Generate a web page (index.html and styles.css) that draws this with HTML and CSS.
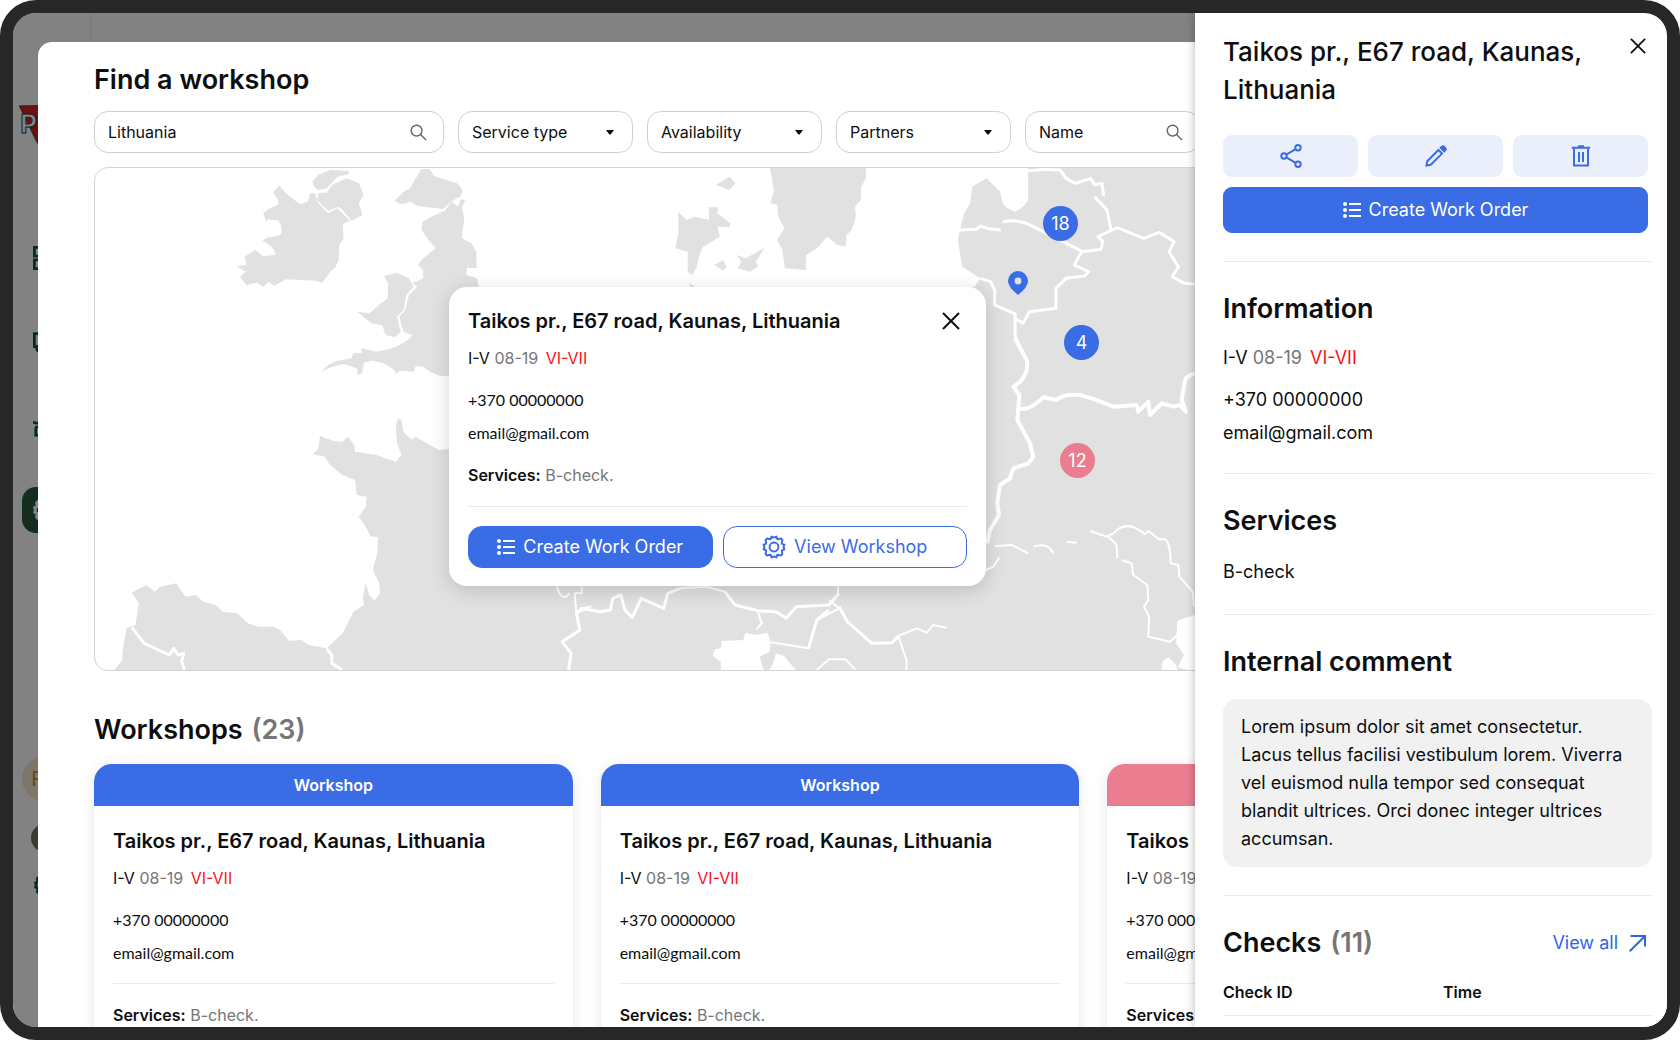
FILE: index.html
```html
<!DOCTYPE html>
<html lang="en">
<head>
<meta charset="utf-8">
<meta name="viewport" content="width=device-width, initial-scale=1">
<title>Find a workshop</title>
<link rel="stylesheet" href="styles.css">
</head>
<body>
<svg class="sprite" aria-hidden="true">
  <symbol id="i-search" viewBox="0 0 18 18"><circle cx="7" cy="7" r="5.7"/><path d="M11.2 11.2 17 17"/></symbol>
  <symbol id="i-close" viewBox="0 0 18 18"><path d="M1 1 17 17M17 1 1 17"/></symbol>
  <symbol id="i-list" viewBox="0 0 18 16"><g fill="currentColor" stroke="none"><circle cx="2" cy="2" r="2"/><circle cx="2" cy="8" r="2"/><circle cx="2" cy="14" r="2"/></g><path d="M6 2H18M6 8H18M6 14H18"/></symbol>
  <symbol id="i-gear" viewBox="0 0 24 24"><circle cx="12" cy="12" r="4.4"/><path d="M8.6 4.2 9.6 1.6Q12 3.2 14.4 1.6L15.4 4.2 19.2 3.6 20.4 4.9 19.8 8.6 22.4 9.6Q20.8 12 22.4 14.4L19.8 15.4 20.4 19.1 19.2 20.4 15.4 19.8 14.4 22.4Q12 20.8 9.6 22.4L8.6 19.8 4.8 20.4 3.6 19.1 4.2 15.4 1.6 14.4Q3.2 12 1.6 9.6L4.2 8.6 3.6 4.9 4.8 3.6Z" stroke-linejoin="round"/></symbol>
  <symbol id="i-share" viewBox="0 0 22 24"><circle cx="4" cy="12" r="2.7"/><circle cx="18" cy="3.8" r="2.7"/><circle cx="18" cy="20.2" r="2.7"/><path d="M6.4 10.6 15.6 5.2M6.4 13.4 15.6 18.8"/></symbol>
  <symbol id="i-edit" viewBox="0 0 22 22"><path d="M1.5 20.5 2.2 16.2 13.4 5 17 8.6 5.8 19.8Z"/><path fill="currentColor" d="M15.8 2.8 17.2 1.6Q18 1 18.9 1.8L20.4 3.3Q21.1 4.1 20.5 4.9L19.2 6.3Z"/></symbol>
  <symbol id="i-trash" viewBox="0 0 20 22"><path d="M3 3.5V20.4H17V3.5M8 7V17M12 7V17"/><path d="M.8 2.8H19.2"/><path d="M7 1.2H13"/></symbol>
  <symbol id="i-arrow" viewBox="0 0 17 17"><path d="M.7 16.3 16 1M1.5 1H16V11.5"/></symbol>
  <symbol id="i-caret" viewBox="0 0 8 5"><path fill="currentColor" stroke="none" d="M0 0H8L5 4Q4 5 3 4Z"/></symbol>
  <symbol id="i-grid" viewBox="0 0 26 26"><path d="M1.5 1.5H11V11H1.5ZM15 1.5H24.5V11H15ZM1.5 15H11V24.5H1.5ZM15 15H24.5V24.5H15Z"/></symbol>
  <symbol id="i-truck" viewBox="0 0 26 26"><path d="M1.5 4H16V18H1.5ZM16 9H21L25 13V18H16"/><circle cx="7" cy="20" r="2.8"/><circle cx="20" cy="20" r="2.8"/></symbol>
  <symbol id="i-trailer" viewBox="0 0 26 26"><path d="M0 9 4 10H22M9 14H5Q3 14 3 17V23H24V14H9"/></symbol>
</svg>

<div class="screen">
  <nav class="sidebar" aria-label="Main">
    <svg class="logo" viewBox="0 0 54 42"><path fill="#e01b22" d="M0 1 54 0 30 42 19 40Z"/><text x="1" y="29">PRO</text></svg>
    <ul class="nav">
      <li><a href="#" aria-label="Dashboard"><svg><use href="#i-grid"/></svg></a></li>
      <li><a href="#" aria-label="Trucks"><svg><use href="#i-truck"/></svg></a></li>
      <li><a href="#" aria-label="Trailers"><svg><use href="#i-trailer"/></svg></a></li>
      <li><a href="#" aria-label="Workshops" class="current"><svg><use href="#i-gear"/></svg></a></li>
    </ul>
    <div class="account">
      <span class="initial">RK</span>
      <span class="photo"></span>
      <svg class="settings"><use href="#i-gear"/></svg>
    </div>
  </nav>
  <div class="backdrop"></div>

  <main class="sheet">
    <h1>Find a workshop</h1>
    <form class="filters">
      <label class="field wide"><input type="text" value="Lithuania" aria-label="Location"><svg class="search"><use href="#i-search"/></svg></label>
      <label class="field"><select aria-label="Service type"><option>Service type</option></select><svg class="caret"><use href="#i-caret"/></svg></label>
      <label class="field"><select aria-label="Availability"><option>Availability</option></select><svg class="caret"><use href="#i-caret"/></svg></label>
      <label class="field"><select aria-label="Partners"><option>Partners</option></select><svg class="caret"><use href="#i-caret"/></svg></label>
      <label class="field"><input type="text" placeholder="Name" aria-label="Name"><svg class="search"><use href="#i-search"/></svg></label>
    </form>

    <section class="map" aria-label="Map">
      <svg class="land" viewBox="95 168 1490 502" preserveAspectRatio="xMinYMin slice">
        <g class="ground">
          <g transform="scale(.35714 .33333)">
            <path d="M662 798 690 795 685 770 715 750 735 768 770 765Q775 745 735 722L745 714 785 705Q795 685 780 662L752 658 745 664 737 640 752 628 780 612 778 600 765 577 782 556 800 580 840 613 862 605 868 580 882 580 890 607 918 640 945 625 980 662 960 672 962 715 950 735 948 780 940 800 925 815 902 849 885 842 800 838 768 858 752 845 737 860 718 848 690 855 672 830 688 815Z"/>
            <path d="M875 545 890 525 925 510 975 512 978 522 945 530 915 565 890 570 880 560Z"/>
            <path d="M892 578 915 578 930 555 970 535 1005 550 1018 585 1005 610 1015 645 985 662 950 620 918 632 888 600Z"/>
            <path d="M1105 603 1130 575 1148 565 1180 507 1203 507 1215 528 1250 540 1280 550 1295 570 1290 590 1270 600 1240 627 1170 618 1150 605 1125 613Z"/>
            <path d="M1245 632 1265 605 1283 620 1290 598 1302 600 1293 625 1300 655 1293 715 1320 730 1333 755 1335 805 1308 803 1305 825 1335 835 1341 860 1341 1000 1300 1127 1257 1127 1234 1128 1209 1118 1184 1100 1164 1098 1159 1115 1119 1112 1109 1122 1104 1110 1074 1090 1044 1082 1019 1088 1014 1120 1002 1125 999 1105 964 1092 929 1100 899 1117 919 1095 944 1082 984 1075 989 1060 1014 1058 1012 1045 1054 1055 1079 1050 1110 1040 1142 1020 1155 1005 1130 995 1118 950 1135 930 1145 885 1168 860 1155 850 1185 835 1185 810 1170 795 1185 775 1220 745 1200 720 1180 690 1183 665 1205 652Z"/>
            <path d="M1075 828 1110 818 1145 835 1158 860 1138 885 1130 930 1112 950 1122 995 1105 1012 1080 1005 1070 975 1040 970 1000 935 1035 940 1065 912 1085 895 1087 850Z"/>
          </g>
          <g transform="translate(560 0) scale(.40816 .33333)">
            <path d="M290 635 310 660 330 650 365 660 365 622 387 622 385 640 418 670 415 682 385 680 392 710 350 740 340 770 335 800 325 825 313 815 313 755 283 745 290 700Z"/>
            <path d="M382 555 415 530 430 550 415 570ZM378 795 400 780 408 800 400 812ZM432 765 455 775 500 745 480 785 485 800 465 815 435 805 445 785ZM318 850 333 862 318 862Z"/>
            <path d="M514 500 524 570 516 610 532 615 535 650 550 685 532 720 545 750 551 805 602 810 603 765 630 745 655 710 680 735 700 740 702 705 715 690 725 650 723 620 737 600 738 560 750 535 750 500Z"/>
            <path d="M1147 500 1147 600Q1135 625 1115 635 1090 625 1085 610L1078 575 1045 535 1010 560 1005 610 990 640 980 690 975 720 985 800 1030 835 1015 860 970 870 970 2020 2600 2020 2600 500Z"/>
          </g>
          <g transform="translate(80 340) scale(.35714 .33333)">
            <path d="M1033 327 1005 330 975 312 940 290 930 300 905 275 900 240 890 236 884 260 888 310 900 345 885 365 830 345 770 335 768 315 750 290 735 305 710 303 672 288 668 325 652 343 685 350 700 375 735 405 770 420 775 465 803 470 800 500 780 530 800 560 815 590 835 590 832 640 820 690 838 730 840 760 825 782 810 765 800 730 792 770 795 795 765 815 750 850 735 880 690 925 640 915 620 900 585 902 560 870 540 860 500 860 470 850 440 820 400 815 380 795 345 785 325 765 295 770 270 730 225 740 210 755 185 735 145 758 165 790 155 855 130 865 120 930 118 960 90 1000 2500 1000 2500 327Z"/>
          </g>
        </g>
        <g class="water">
          <path transform="translate(900 340) scale(.33333)" d="M832 842 900 820 900 1000 833 982 852 945 828 910ZM783 1000 788 962 805 952 828 975 835 1000Z"/>
          <path transform="translate(580 560) scale(.40816 .33333)" d="M347 243 400 240 405 218 430 225 460 218 467 250 465 275 440 290 452 340 345 340 345 305 325 288 330 268 345 265ZM460 340 475 305 480 280 500 288 535 340Z"/>
        </g>
        <g class="borders">
          <path class="medium" transform="translate(560 0) scale(.40816 .33333)" d="M1147 512 1190 508 1225 510 1240 535 1262 550 1300 535 1310 555 1328 550 1332 588M1310 590 1340 630 1350 690M980 690 1020 688 1030 678 1050 686 1080 690M1085 665Q1125 655 1160 680L1200 705 1280 755 1325 748 1330 725 1318 710 1365 683 1400 700 1430 715 1468 697 1505 725 1492 755 1515 800 1500 830 1530 850 1580 855M1278 755 1260 795 1295 815 1285 828 1240 835 1215 865 1215 925 1150 935 1135 970 1115 955 1115 1010 1135 1060M1030 835 1055 845 1065 870 1065 915 1115 942 1115 960"/>
          <g transform="translate(900 340) scale(.33333)">
            <path class="heavy" d="M345 -5 380 60Q390 110 340 140L358 165 352 240 390 310 400 350 385 370 340 385 330 415 300 435 292 490 297 525 270 570 262 610M358 205Q385 215 430 172L470 180Q490 160 540 165L585 178 640 200 710 195 715 215 745 185 750 225 785 190 820 200 840 195 858 215 845 180 855 120Q865 100 900 100"/>
            <path d="M285 618 335 615 385 640M400 620Q445 605 460 640M500 605 530 608M570 573 620 590 640 580Q680 535 735 583L745 573 780 600Q810 580 812 670L835 675 838 710 878 755 882 800M625 590 650 615 652 655M665 660 695 670 700 705 742 735 745 780 732 800 747 830 745 890 810 905 832 885M258 690 280 680 298 652"/>
          </g>
          <path class="medium" transform="translate(580 560) scale(.40816 .33333)" d="M0 145 50 155 75 150 80 115 100 105 110 150 128 172 150 115 205 145 215 100 245 85M355 95 380 135 435 152 480 155 505 175 530 140 610 135 635 100M635 140 655 185 715 250 765 248 780 228M610 150 580 180 560 265"/>
          <path transform="translate(580 560) scale(.40816 .33333)" d="M245 85 310 80 355 95M632 105V75M435 152 445 190 432 208M610 120 635 145 580 180 560 265 467 247M780 228 825 205 850 218 865 195 898 203M780 228 800 300 800 330M580 330 610 298 650 298 675 330"/>
          <path class="medium" transform="translate(80 340) scale(.35714 .33333)" d="M145 862 180 910 250 945 262 925 275 945 290 940 285 965 292 990M690 925 705 945 705 970 735 990M1368 990 1375 940 1350 905 1400 870 1390 820 1405 805"/>
          <path transform="translate(80 340) scale(.35714 .33333)" d="M1385 760 1390 820 1430 800 1405 805M1335 740Q1350 790 1370 760M1385 760H1405V740"/>
        </g>
      </svg>

      <button type="button" class="cluster c18">18</button>
      <button type="button" class="cluster c4">4</button>
      <button type="button" class="cluster pink c12">12</button>
      <svg class="pin" viewBox="0 0 20 24"><path d="M10 0A10 10 0 0 1 20 10Q20 16 10 24 0 16 0 10A10 10 0 0 1 10 0Z"/><circle cx="10" cy="10" r="3.4"/></svg>

      <article class="popup">
        <header><h3>Taikos pr., E67 road, Kaunas, Lithuania</h3><button type="button" class="bare" aria-label="Close"><svg><use href="#i-close"/></svg></button></header>
        <p class="hours">I-V <span class="muted">08-19</span> <span class="closed">VI-VII</span></p>
        <p class="phone">+370 00000000</p>
        <p class="email">email@gmail.com</p>
        <p class="services"><b>Services:</b> <span class="muted">B-check.</span></p>
        <div class="actions">
          <button type="button" class="btn primary"><svg class="list"><use href="#i-list"/></svg>Create Work Order</button>
          <button type="button" class="btn outline"><svg class="gear"><use href="#i-gear"/></svg>View Workshop</button>
        </div>
      </article>
    </section>

    <h2>Workshops <span class="count">(23)</span></h2>
    <div class="cards">
      <article class="card">
        <div class="tag">Workshop</div>
        <div class="body">
          <h3>Taikos pr., E67 road, Kaunas, Lithuania</h3>
          <p class="hours">I-V <span class="muted">08-19</span> <span class="closed">VI-VII</span></p>
          <p class="phone">+370 00000000</p>
          <p class="email">email@gmail.com</p>
          <p class="services ruled"><b>Services:</b> <span class="muted">B-check.</span></p>
        </div>
      </article>
      <article class="card">
        <div class="tag">Workshop</div>
        <div class="body">
          <h3>Taikos pr., E67 road, Kaunas, Lithuania</h3>
          <p class="hours">I-V <span class="muted">08-19</span> <span class="closed">VI-VII</span></p>
          <p class="phone">+370 00000000</p>
          <p class="email">email@gmail.com</p>
          <p class="services ruled"><b>Services:</b> <span class="muted">B-check.</span></p>
        </div>
      </article>
      <article class="card">
        <div class="tag pink"></div>
        <div class="body">
          <h3>Taikos pr., E67 road, Kaunas, Lithuania</h3>
          <p class="hours">I-V <span class="muted">08-19</span></p>
          <p class="phone">+370 00000000</p>
          <p class="email">email@gmail.com</p>
          <p class="services ruled"><b>Services:</b></p>
        </div>
      </article>
    </div>
  </main>

  <aside class="drawer" aria-label="Workshop details">
    <header class="drawer-head">
      <h2>Taikos pr., E67 road, Kaunas, Lithuania</h2>
      <button type="button" class="bare" aria-label="Close panel"><svg><use href="#i-close"/></svg></button>
    </header>
    <div class="tools">
      <button type="button" class="tool" aria-label="Share"><svg><use href="#i-share"/></svg></button>
      <button type="button" class="tool" aria-label="Edit"><svg><use href="#i-edit"/></svg></button>
      <button type="button" class="tool trash" aria-label="Delete"><svg><use href="#i-trash"/></svg></button>
      <button type="button" class="btn primary order"><svg class="list"><use href="#i-list"/></svg>Create Work Order</button>
    </div>
    <section>
      <h2>Information</h2>
      <p class="hours">I-V <span class="muted">08-19</span> <span class="closed">VI-VII</span></p>
      <p class="phone">+370 00000000</p>
      <p class="email">email@gmail.com</p>
    </section>
    <section>
      <h2>Services</h2>
      <p class="text">B-check</p>
    </section>
    <section>
      <h2>Internal comment</h2>
      <p class="comment">Lorem ipsum dolor sit amet consectetur. Lacus tellus facilisi vestibulum lorem. Viverra vel euismod nulla tempor sed consequat blandit ultrices. Orci donec integer ultrices accumsan.</p>
    </section>
    <section>
      <div class="row"><h2>Checks <span class="count">(11)</span></h2><a href="#">View all<svg><use href="#i-arrow"/></svg></a></div>
      <table><thead><tr><th scope="col">Check ID</th><th scope="col">Time</th></tr></thead></table>
    </section>
  </aside>
</div>
</body>
</html>
```
FILE: styles.css
```css
* { box-sizing: border-box; }
:root { --blue: #3a6ce6; --pink: #ea7d90; --ink: #0d0e10; --muted: #757575; --line: #ebebeb; }
body { margin: 0; background: #fff; color: var(--ink); font: 16px/24px Inter, "Liberation Sans", sans-serif; }
h1, h2, h3, p, ul { margin: 0; padding: 0; }
h1, h2 { font-size: 27px; line-height: 34px; font-weight: 600; }
h3 { font-size: 20px; line-height: 28px; font-weight: 600; }
button, input, select { font: inherit; color: inherit; }
button { cursor: pointer; }
svg { fill: none; stroke: currentColor; display: block; flex: none; }
.sprite { position: absolute; width: 0; height: 0; }

.screen { position: relative; height: 100vh; overflow: hidden; border: 13px solid #272727; border-radius: 36px; background: #fff; }

/* Navigation behind the sheet */
.sidebar { display: flex; flex-direction: column; align-items: center; width: 78px; height: 100%; padding: 92px 14px 131px 0; border-right: 1px solid #eee; color: #0b5a34; }
.logo { width: 52px; height: 40px; margin-bottom: 90px; overflow: visible; }
.logo text { font: 700 27px Inter, sans-serif; fill: #fff; stroke: #333; stroke-width: 1px; }
.nav { display: flex; flex-direction: column; gap: 38px; list-style: none; }
.nav a { display: grid; place-items: center; width: 46px; height: 46px; border-radius: 14px; color: inherit; }
.nav svg { width: 24px; height: 24px; stroke-width: 3px; }
.nav .current { background: #26583b; color: #fff; }
.account { display: flex; flex-direction: column; align-items: center; gap: 22px; margin-top: auto; }
.initial { display: grid; place-items: center; width: 46px; height: 46px; border-radius: 50%; background: #f7e9cf; color: #d0901c; font-size: 20px; }
.photo { width: 28px; height: 28px; border-radius: 50%; background: #77776a; }
.settings { width: 22px; height: 22px; stroke-width: 3px; }
.backdrop { position: absolute; inset: 0; background: rgb(0 0 0 / 49%); border-radius: 22px; }

/* Search sheet */
.sheet { position: absolute; inset: 29px 0 0 25px; padding: 21px 81px 0 56px; background: #fff; border-top-left-radius: 14px; overflow: hidden; }
.filters { display: flex; gap: 14px; margin: 14px 0; }
.field { display: flex; align-items: center; width: 175px; height: 42px; padding-right: 16px; border: 1px solid #d0d0d0; border-radius: 14px; }
.wide { width: 350px; }
.field input, .field select { flex: 1; min-width: 0; height: 100%; padding: 0 0 0 13px; border: 0; outline: 0; background: none; appearance: none; }
.field input::placeholder { color: inherit; opacity: 1; }
.search { width: 17px; height: 17px; color: #666; stroke-width: 1.5px; }
.field .search { margin-left: 8px; }
.caret { width: 8px; height: 5px; margin-right: 2px; }

.map { position: relative; height: 504px; border: 1px solid #d4d4d4; border-radius: 14px; overflow: hidden; }
.land { width: 100%; height: 100%; stroke: none; }
.ground { fill: #e1e1e1; }
.water { fill: #fff; }
.borders path { fill: none; stroke: #fff; stroke-width: 2px; stroke-linejoin: round; vector-effect: non-scaling-stroke; }
.borders .medium { stroke-width: 3px; }
.borders .heavy { stroke-width: 4px; }
.cluster { position: absolute; width: 35px; height: 35px; padding: 0; border: 0; border-radius: 50%; background: var(--blue); color: #fff; font-size: 18px; }
.pink { background: var(--pink); }
.c18 { left: 948px; top: 38px; }
.c4 { left: 969px; top: 157px; }
.c12 { left: 965px; top: 275px; }
.pin { position: absolute; left: 913px; top: 103px; width: 20px; height: 24px; stroke: none; fill: var(--blue); }
.pin circle { fill: #e1e1e1; }

.popup { position: absolute; left: 354px; top: 119px; width: 537px; padding: 20px 19px 18px; border-radius: 18px; background: #fff; box-shadow: 0 4px 20px rgb(0 0 0 / 16%); }
.popup header { display: flex; justify-content: space-between; align-items: center; padding-right: 7px; }
.bare { display: block; padding: 0; border: 0; background: none; }
.bare svg { width: 18px; height: 18px; stroke-width: 2px; }
.hours { margin-top: 11px; }
.hours .closed { color: #f5141a; margin-left: 3px; }
.muted { color: var(--muted); }
.phone { margin-top: 18px; }
.email { margin-top: 9px; }
.popup .phone, .popup .email, .card .phone, .card .email { font-family: Lato, Inter, sans-serif; }
.services { margin-top: 18px; }
.services b { font-weight: 600; }
.ruled { padding-top: 19px; border-top: 1px solid var(--line); }
.actions { display: grid; grid-template-columns: 1fr 1fr; gap: 10px; margin-top: 19px; padding-top: 19px; border-top: 1px solid var(--line); }
.btn { display: flex; align-items: center; justify-content: center; gap: 8px; height: 42px; padding: 0; border: 1px solid var(--blue); border-radius: 14px; font-size: 18px; white-space: nowrap; }
.primary { background: var(--blue); color: #fff; }
.outline { background: #fff; color: var(--blue); }
.list { width: 18px; height: 16px; stroke-width: 2px; }
.gear { width: 24px; height: 24px; stroke-width: 2px; }

.sheet > h2 { margin-top: 42px; }
.count { color: var(--muted); margin-left: 2px; }
.cards { display: grid; grid-template-columns: repeat(3, 1fr); gap: 28px; margin-top: 17px; }
.card { border-radius: 18px; background: #fff; box-shadow: 0 2px 14px rgb(0 0 0 / 10%); }
.tag { height: 42px; border-radius: 18px 18px 0 0; background: var(--blue); color: #fff; font-weight: 600; line-height: 42px; text-align: center; }
.tag.pink { background: var(--pink); }
.body { padding: 21px 19px; }

/* Details drawer */
.drawer { position: absolute; inset: 0 0 0 auto; width: 472px; padding: 20px 15px 0 28px; border-radius: 0 22px 22px 0; background: #fff; box-shadow: 0 0 10px rgb(0 0 0 / 30%); overflow: hidden; font-size: 18px; }
.drawer-head { display: flex; justify-content: space-between; align-items: flex-start; padding-right: 6px; }
.drawer-head h2 { flex: 1; font-size: 26px; line-height: 38px; font-weight: 500; }
.drawer-head .bare { margin-top: 5px; }
.drawer-head .bare svg { width: 16px; height: 16px; }
.tools { display: grid; grid-template-columns: repeat(3, 1fr); gap: 10px; margin: 26px 4px 28px 0; }
.tool { display: grid; place-items: center; height: 42px; padding: 0; border: 0; border-radius: 9px; background: #ebeffc; color: var(--blue); }
.tool svg { width: 22px; height: 24px; stroke-width: 2px; }
.trash svg { width: 20px; height: 22px; stroke-width: 2px; }
.order { grid-column: 1 / -1; height: 46px; border-radius: 9px; }
.drawer section { padding: 30px 0 28px; border-top: 1px solid var(--line); }
.drawer section > h2 + * { margin-top: 20px; }
.text { line-height: 28px; }
.comment { padding: 14px 18px; border-radius: 14px; background: #f1f1f1; line-height: 28px; }
.row { display: flex; justify-content: space-between; align-items: center; padding-right: 6px; }
.row a { display: flex; align-items: center; gap: 11px; color: #2d66ee; text-decoration: none; }
.row a svg { width: 17px; height: 17px; stroke-width: 2px; }
table { width: 100%; margin-top: 19px; border-collapse: collapse; table-layout: fixed; }
th { height: 36px; padding: 0 0 10px; border-bottom: 1px solid var(--line); font-size: 16px; font-weight: 600; text-align: left; }
th:first-child { width: 220px; }
```
